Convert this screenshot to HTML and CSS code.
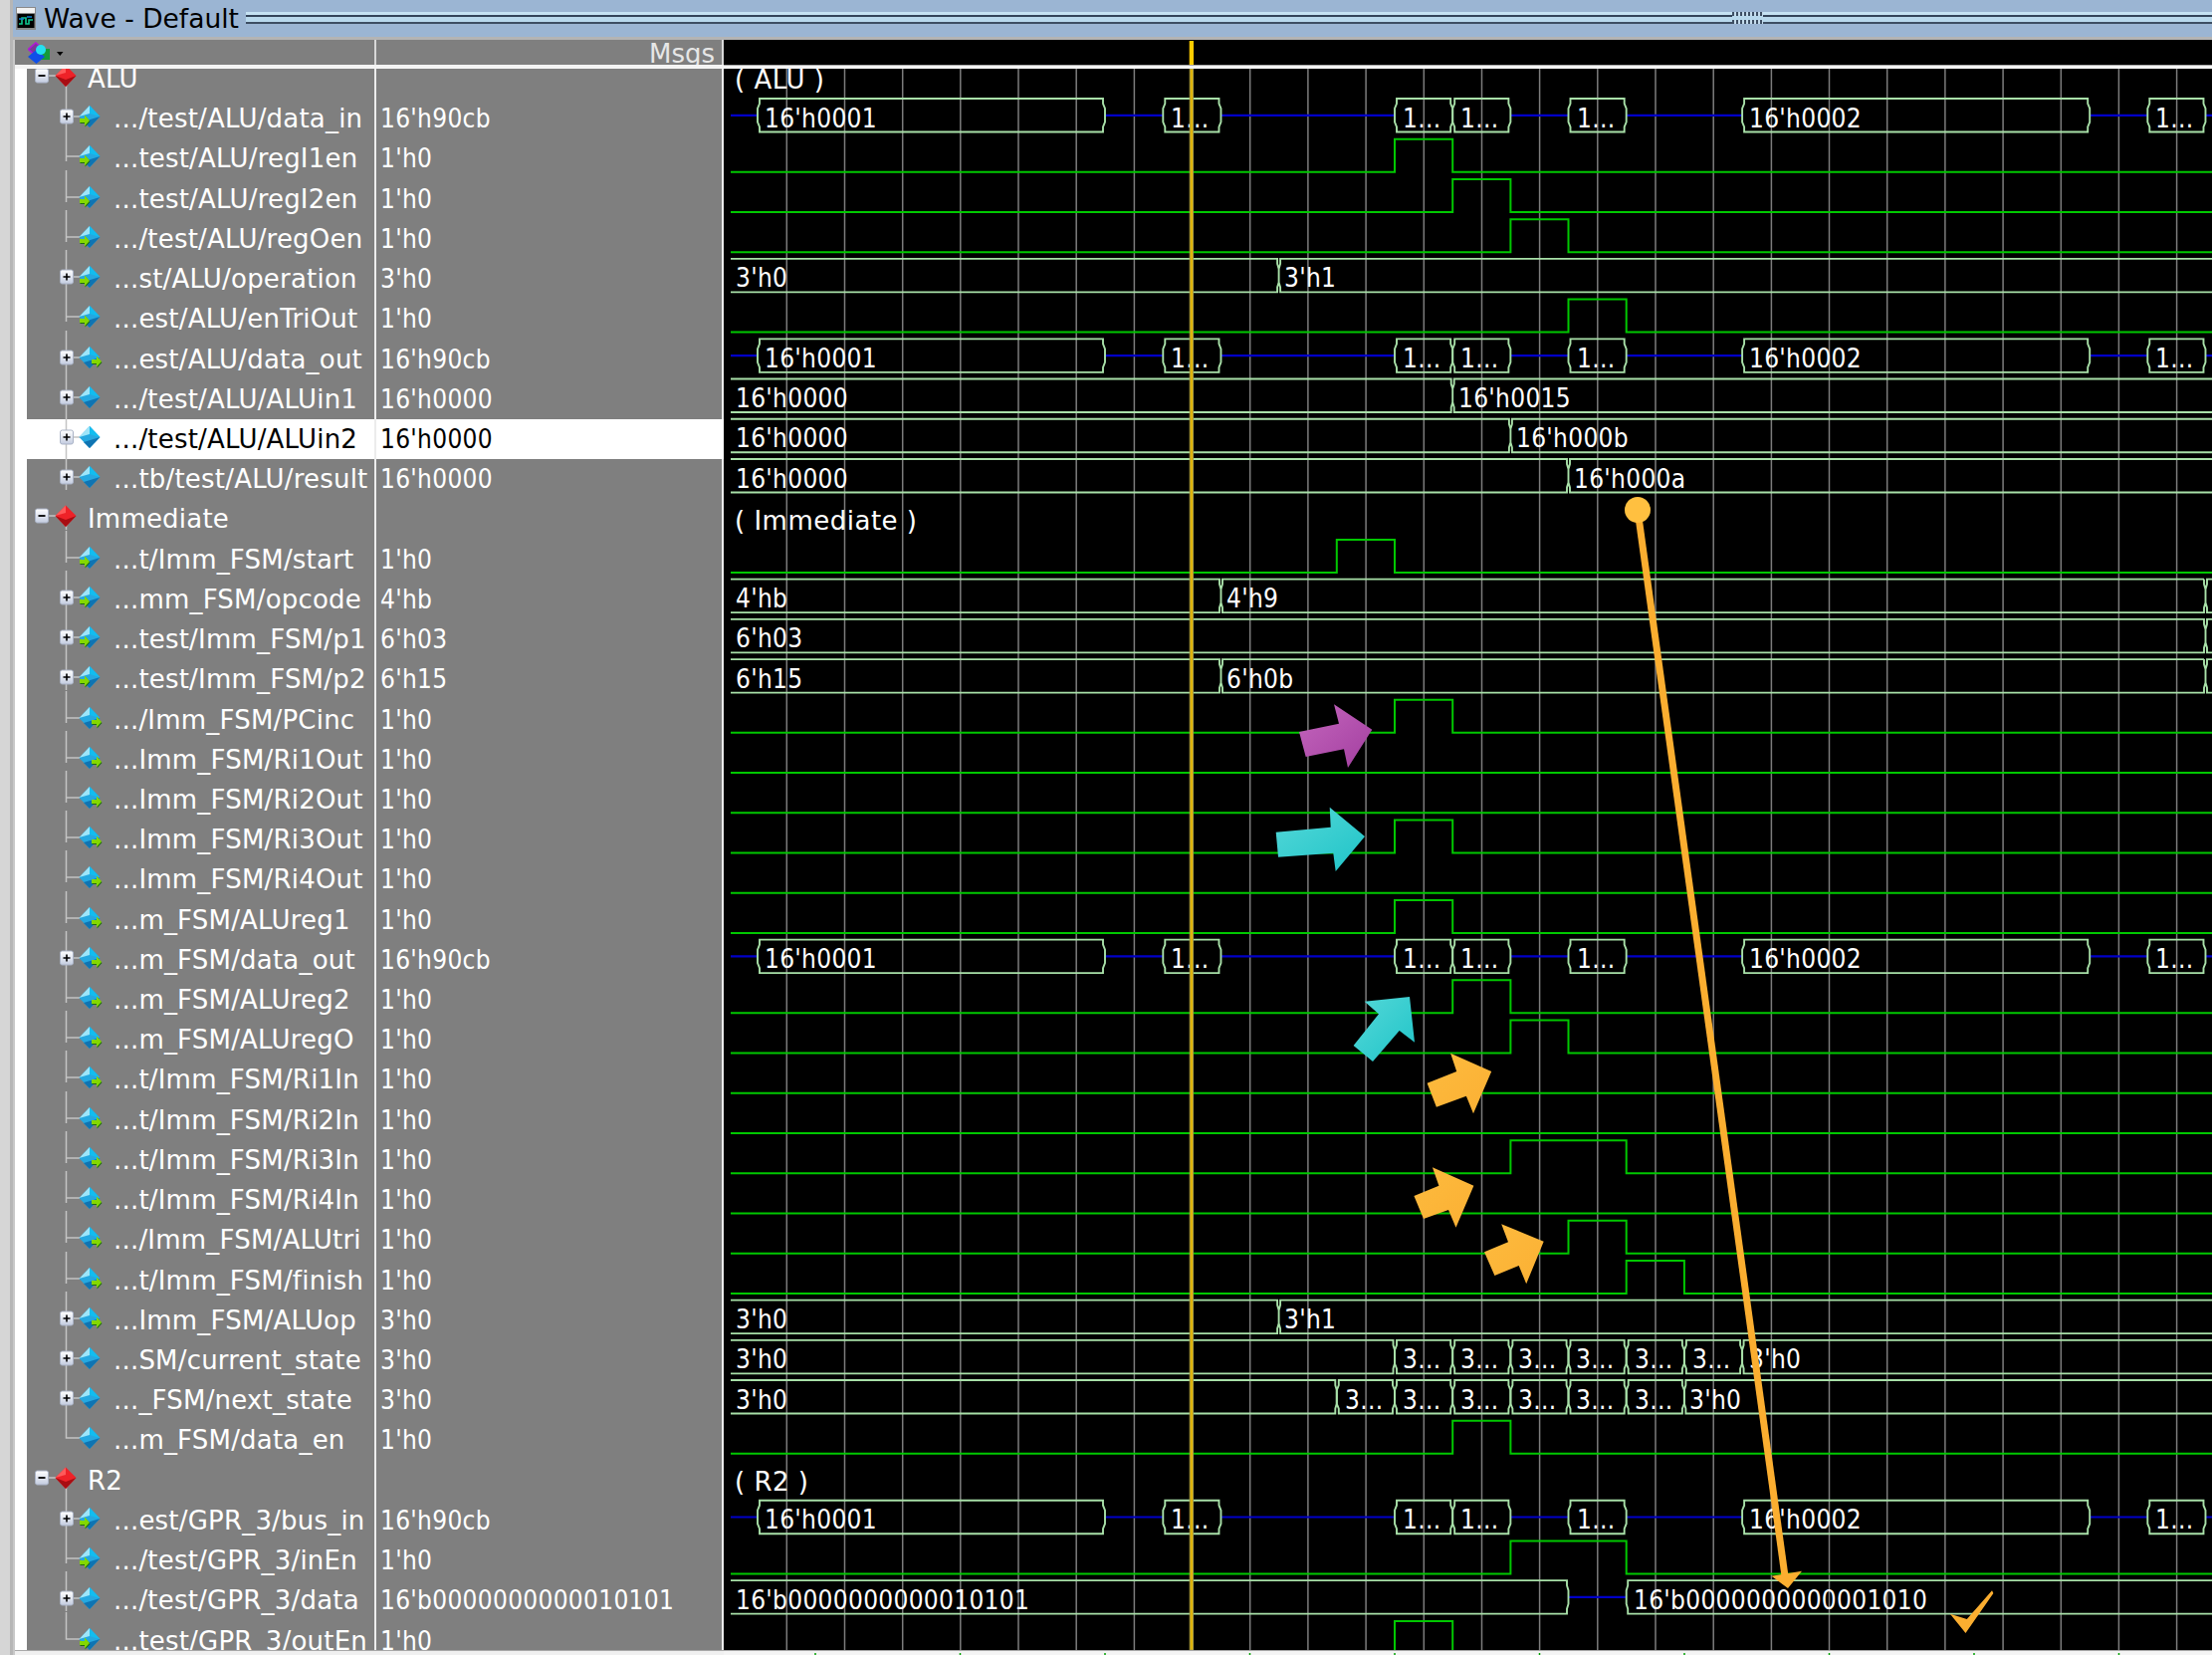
FILE: index.html
```html
<!DOCTYPE html>
<html lang="en">
<head>
<meta charset="utf-8">
<title>Wave - Default</title>
<link rel="stylesheet" href="styles.css">
</head>
<body>
<svg class="defs" width="0" height="0" aria-hidden="true">
  <defs>
    <linearGradient id="btn" x1="0" y1="0" x2="0" y2="1"><stop offset="0" stop-color="#fff"/><stop offset="1" stop-color="#c3cce0"/></linearGradient>
    <linearGradient id="arrowPurple" x1="0" y1="0" x2="1" y2="1"><stop offset="0" stop-color="#c466bd"/><stop offset="1" stop-color="#a33fa0"/></linearGradient>
    <linearGradient id="arrowCyan" x1="0" y1="0" x2="1" y2="1"><stop offset="0" stop-color="#55d8d8"/><stop offset="1" stop-color="#1fc4c8"/></linearGradient>
    <linearGradient id="arrowOrange" x1="0" y1="0" x2="1" y2="1"><stop offset="0" stop-color="#fdbb3e"/><stop offset="1" stop-color="#fbb034"/></linearGradient>

    <g id="plus"><rect x="33.5" y="11" width="13" height="14" rx="2" fill="url(#btn)" stroke="#aab3c6"/><path d="M36.5 18h7M40 14.500v7" stroke="#000" stroke-width="1.600"/></g>
    <g id="leaf"><path d="M39.500 -9V23M39.500 18H53" class="tree"/></g>
    <g id="last"><path d="M39.500 -9V18H53" class="tree"/></g>
    <g id="branch"><path d="M39.500 -9V31M46 18H53" class="tree"/><use href="#plus"/></g>
    <g id="diamond">
      <path d="M63 7L73.500 18L63 29L52.500 18Z" fill="#25a8e0"/>
      <path d="M73.500 18L63 29L57 23Z" fill="#0f74b2"/>
      <path d="M63 7L52.500 18L63 15Z" fill="#9ee6fa"/>
      <path d="M63 15L73.500 18L63 7Z" fill="#12bdf0"/>
    </g>
    <g id="arrowShape"><path d="M0 -2h5v-3.500l5 5.500l-5 5.500v-3.500h-5z" fill="#1d6a10" transform="translate(.5 1)"/><path d="M0 -2h5v-3.500l5 5.500l-5 5.500v-3.500h-5z" fill="#84d800"/></g>
    <g id="sig"><use href="#diamond"/></g>
    <g id="sig-in"><use href="#diamond"/><use href="#arrowShape" transform="translate(53 22)"/></g>
    <g id="sig-out"><use href="#diamond"/><use href="#arrowShape" transform="translate(65 22)"/></g>
    <g id="group">
      <path d="M21 17H30M39.500 26V31" class="tree"/>
      <rect x="8.500" y="10" width="13" height="14" rx="2" fill="url(#btn)" stroke="#aab3c6"/><path d="M11.500 17h7" stroke="#000" stroke-width="1.800"/>
      <path d="M39 6.500L49.500 17L39 28L28.500 17Z" fill="#ee2228"/>
      <path d="M49.500 17L39 28L28.500 17L39 21Z" fill="#a80d12"/>
      <path d="M39 6.500L28.500 17L39 14Z" fill="#ff5a5a"/>
    </g>
  </defs>
</svg>

<div class="window">
  <div class="edge"></div>
  <div class="main">
    <header class="title">
      <svg class="title-icon" width="20" height="23" viewBox="0 0 20 23">
        <rect width="20" height="23" fill="#8a8a8a"/><rect x="1" y="1" width="18" height="5" fill="#f2f2f2"/><rect x="1.500" y="7" width="17" height="14" fill="#000"/>
        <path d="M3 17h3v-6h4v6h3v-4h4" fill="none" stroke="#10c890" stroke-width="1.600"/><path d="M3 12h5M11 10h5" stroke="#1080d0" stroke-width="1.400"/>
      </svg>
      <span class="title-text">Wave - Default</span>
      <div class="stripes stripes-left"></div>
      <div class="handle"></div>
      <div class="stripes stripes-right"></div>
    </header>
    <div class="panes">
      <div class="table">
        <div class="head">
          <div class="head-name">
            <svg class="head-icon" width="36" height="23" viewBox="0 0 36 23">
              <path d="M8 1L15.500 7.500L8 14L.5 7.500Z" fill="#7a3a96" stroke="#b018d8" stroke-width="1.600"/>
              <rect x="10" y="7" width="12" height="11" fill="#159a3a"/>
              <path d="M8.500 8L17 15L8.500 22L0 15Z" fill="#0f4fe8"/>
              <circle cx="13" cy="8" r="5" fill="#25e0f0"/>
              <path d="M29 10h6.500l-3.250 4z" fill="#000"/>
            </svg>
          </div>
          <div class="head-val">Msgs</div>
        </div>
        <div class="list">
          <div class="rows">
            <div class="row group"><div class="name"><svg class="node"><use href="#group"/></svg><span>ALU</span></div><div class="val"></div></div>
            <div class="row"><div class="name"><svg class="node"><use href="#branch"/><use href="#sig-in"/></svg><span>.../test/ALU/data_in</span></div><div class="val">16'h90cb</div></div>
            <div class="row"><div class="name"><svg class="node"><use href="#leaf"/><use href="#sig-in"/></svg><span>...test/ALU/regI1en</span></div><div class="val">1'h0</div></div>
            <div class="row"><div class="name"><svg class="node"><use href="#leaf"/><use href="#sig-in"/></svg><span>...test/ALU/regI2en</span></div><div class="val">1'h0</div></div>
            <div class="row"><div class="name"><svg class="node"><use href="#leaf"/><use href="#sig-in"/></svg><span>.../test/ALU/regOen</span></div><div class="val">1'h0</div></div>
            <div class="row"><div class="name"><svg class="node"><use href="#branch"/><use href="#sig-in"/></svg><span>...st/ALU/operation</span></div><div class="val">3'h0</div></div>
            <div class="row"><div class="name"><svg class="node"><use href="#leaf"/><use href="#sig-in"/></svg><span>...est/ALU/enTriOut</span></div><div class="val">1'h0</div></div>
            <div class="row"><div class="name"><svg class="node"><use href="#branch"/><use href="#sig-out"/></svg><span>...est/ALU/data_out</span></div><div class="val">16'h90cb</div></div>
            <div class="row"><div class="name"><svg class="node"><use href="#branch"/><use href="#sig"/></svg><span>.../test/ALU/ALUin1</span></div><div class="val">16'h0000</div></div>
            <div class="row selected"><div class="name"><svg class="node"><use href="#branch"/><use href="#sig"/></svg><span>.../test/ALU/ALUin2</span></div><div class="val">16'h0000</div></div>
            <div class="row"><div class="name"><svg class="node"><use href="#branch"/><use href="#sig"/></svg><span>...tb/test/ALU/result</span></div><div class="val">16'h0000</div></div>
            <div class="row group"><div class="name"><svg class="node"><use href="#group"/></svg><span>Immediate</span></div><div class="val"></div></div>
            <div class="row"><div class="name"><svg class="node"><use href="#leaf"/><use href="#sig-in"/></svg><span>...t/Imm_FSM/start</span></div><div class="val">1'h0</div></div>
            <div class="row"><div class="name"><svg class="node"><use href="#branch"/><use href="#sig-in"/></svg><span>...mm_FSM/opcode</span></div><div class="val">4'hb</div></div>
            <div class="row"><div class="name"><svg class="node"><use href="#branch"/><use href="#sig-in"/></svg><span>...test/Imm_FSM/p1</span></div><div class="val">6'h03</div></div>
            <div class="row"><div class="name"><svg class="node"><use href="#branch"/><use href="#sig-in"/></svg><span>...test/Imm_FSM/p2</span></div><div class="val">6'h15</div></div>
            <div class="row"><div class="name"><svg class="node"><use href="#leaf"/><use href="#sig-out"/></svg><span>.../Imm_FSM/PCinc</span></div><div class="val">1'h0</div></div>
            <div class="row"><div class="name"><svg class="node"><use href="#leaf"/><use href="#sig-out"/></svg><span>...Imm_FSM/Ri1Out</span></div><div class="val">1'h0</div></div>
            <div class="row"><div class="name"><svg class="node"><use href="#leaf"/><use href="#sig-out"/></svg><span>...Imm_FSM/Ri2Out</span></div><div class="val">1'h0</div></div>
            <div class="row"><div class="name"><svg class="node"><use href="#leaf"/><use href="#sig-out"/></svg><span>...Imm_FSM/Ri3Out</span></div><div class="val">1'h0</div></div>
            <div class="row"><div class="name"><svg class="node"><use href="#leaf"/><use href="#sig-out"/></svg><span>...Imm_FSM/Ri4Out</span></div><div class="val">1'h0</div></div>
            <div class="row"><div class="name"><svg class="node"><use href="#leaf"/><use href="#sig-out"/></svg><span>...m_FSM/ALUreg1</span></div><div class="val">1'h0</div></div>
            <div class="row"><div class="name"><svg class="node"><use href="#branch"/><use href="#sig-out"/></svg><span>...m_FSM/data_out</span></div><div class="val">16'h90cb</div></div>
            <div class="row"><div class="name"><svg class="node"><use href="#leaf"/><use href="#sig-out"/></svg><span>...m_FSM/ALUreg2</span></div><div class="val">1'h0</div></div>
            <div class="row"><div class="name"><svg class="node"><use href="#leaf"/><use href="#sig-out"/></svg><span>...m_FSM/ALUregO</span></div><div class="val">1'h0</div></div>
            <div class="row"><div class="name"><svg class="node"><use href="#leaf"/><use href="#sig-out"/></svg><span>...t/Imm_FSM/Ri1In</span></div><div class="val">1'h0</div></div>
            <div class="row"><div class="name"><svg class="node"><use href="#leaf"/><use href="#sig-out"/></svg><span>...t/Imm_FSM/Ri2In</span></div><div class="val">1'h0</div></div>
            <div class="row"><div class="name"><svg class="node"><use href="#leaf"/><use href="#sig-out"/></svg><span>...t/Imm_FSM/Ri3In</span></div><div class="val">1'h0</div></div>
            <div class="row"><div class="name"><svg class="node"><use href="#leaf"/><use href="#sig-out"/></svg><span>...t/Imm_FSM/Ri4In</span></div><div class="val">1'h0</div></div>
            <div class="row"><div class="name"><svg class="node"><use href="#leaf"/><use href="#sig-out"/></svg><span>.../Imm_FSM/ALUtri</span></div><div class="val">1'h0</div></div>
            <div class="row"><div class="name"><svg class="node"><use href="#leaf"/><use href="#sig-out"/></svg><span>...t/Imm_FSM/finish</span></div><div class="val">1'h0</div></div>
            <div class="row"><div class="name"><svg class="node"><use href="#branch"/><use href="#sig-out"/></svg><span>...Imm_FSM/ALUop</span></div><div class="val">3'h0</div></div>
            <div class="row"><div class="name"><svg class="node"><use href="#branch"/><use href="#sig"/></svg><span>...SM/current_state</span></div><div class="val">3'h0</div></div>
            <div class="row"><div class="name"><svg class="node"><use href="#branch"/><use href="#sig"/></svg><span>..._FSM/next_state</span></div><div class="val">3'h0</div></div>
            <div class="row"><div class="name"><svg class="node"><use href="#last"/><use href="#sig"/></svg><span>...m_FSM/data_en</span></div><div class="val">1'h0</div></div>
            <div class="row group"><div class="name"><svg class="node"><use href="#group"/></svg><span>R2</span></div><div class="val"></div></div>
            <div class="row"><div class="name"><svg class="node"><use href="#branch"/><use href="#sig-in"/></svg><span>...est/GPR_3/bus_in</span></div><div class="val">16'h90cb</div></div>
            <div class="row"><div class="name"><svg class="node"><use href="#leaf"/><use href="#sig-in"/></svg><span>.../test/GPR_3/inEn</span></div><div class="val">1'h0</div></div>
            <div class="row"><div class="name"><svg class="node"><use href="#branch"/><use href="#sig"/></svg><span>.../test/GPR_3/data</span></div><div class="val">16'b0000000000010101</div></div>
            <div class="row"><div class="name"><svg class="node"><use href="#last"/><use href="#sig-in"/></svg><span>...test/GPR_3/outEn</span></div><div class="val">1'h0</div></div>
          </div>
        </div>
        <div class="foot"></div>
      </div>

      <svg class="wave" width="1495" height="1622" viewBox="727 40 1495 1622">
        <defs>
          <path id="lo" d="M734 0H2222"/>
          <path id="pm1" d="M734 0H1342.800V-33H1401V0H2222"/>
          <path id="p0" d="M734 0H1401V-33H1459.200V0H2222"/>
          <path id="p1" d="M734 0H1459.200V-33H1517.400V0H2222"/>
          <path id="p2" d="M734 0H1517.400V-33H1575.500V0H2222"/>
          <path id="p3" d="M734 0H1575.500V-33H1633.700V0H2222"/>
          <path id="p4" d="M734 0H1633.700V-33H1691.900V0H2222"/>
          <path id="p23" d="M734 0H1517.400V-33H1633.700V0H2222"/>
          <path id="box58" d="M2-33.500H56.180v5l2 5v13.500l-2 5v5H2v-5l-2-5v-13.500l2-5z"/>
          <g id="bus">
            <path class="blue" d="M734-16.700H761M1110-16.700H1168.300M1226.500-16.700H1401M1517.400-16.700H1575.500M1633.700-16.700H1750.100M2099.200-16.700H2157.300M2215.500-16.700H2222"/>
            <path class="busline" d="M763-33.500H1108v5l2 5v13.500l-2 5v5H763v-5l-2-5v-13.500l2-5zM1752.100-33.500H2097.200v5l2 5v13.500l-2 5v5H1752.100v-5l-2-5v-13.500l2-5z"/>
            <use class="busline" href="#box58" x="1168.300"/>
            <use class="busline" href="#box58" x="1401"/>
            <use class="busline" href="#box58" x="1459.200"/>
            <use class="busline" href="#box58" x="1575.500"/>
            <use class="busline" href="#box58" x="2157.300"/>
          </g>
        </defs>
        <rect class="bg" x="727" y="40" width="1495" height="1622"/>

        <path class="grid" d="M790.300 69V1657M848.500 69V1657M906.700 69V1657M964.800 69V1657M1023 69V1657M1081.200 69V1657M1139.400 69V1657M1255.700 69V1657M1313.900 69V1657M1372.100 69V1657M1430.300 69V1657M1488.500 69V1657M1546.600 69V1657M1604.800 69V1657M1663 69V1657M1721.200 69V1657M1779.400 69V1657M1837.500 69V1657M1895.700 69V1657M1953.900 69V1657M2012.100 69V1657M2070.300 69V1657M2128.400 69V1657M2186.600 69V1657"/>

        <text class="wg" x="738" y="89">( ALU )</text>
        <text class="wg" x="738" y="532">( Immediate )</text>
        <text class="wg" x="738" y="1497">( R2 )</text>

        <g class="sigs">
          <use href="#p0" y="172.740"/>
          <use href="#p1" y="212.960"/>
          <use href="#p2" y="253.180"/>
          <use href="#p3" y="333.620"/>
          <use href="#pm1" y="574.940"/>
          <use href="#p0" y="735.820"/>
          <use href="#lo" y="776.040"/>
          <use href="#lo" y="816.260"/>
          <use href="#p0" y="856.480"/>
          <use href="#lo" y="896.700"/>
          <use href="#p0" y="936.920"/>
          <use href="#p1" y="1017.360"/>
          <use href="#p2" y="1057.580"/>
          <use href="#lo" y="1097.800"/>
          <use href="#lo" y="1138.020"/>
          <use href="#p23" y="1178.240"/>
          <use href="#lo" y="1218.460"/>
          <use href="#p3" y="1258.680"/>
          <use href="#p4" y="1298.900"/>
          <use href="#p1" y="1459.780"/>
          <use href="#p23" y="1580.440"/>
          <use href="#p0" y="1660.880"/>
        </g>

        <g transform="translate(0 132.520)"><use href="#bus"/><text class="wt" x="768" y="-5">16'h0001</text><text class="wt" x="1176" y="-5">1...</text><text class="wt" x="1409" y="-5">1...</text><text class="wt" x="1467" y="-5">1...</text><text class="wt" x="1584" y="-5">1...</text><text class="wt" x="1757" y="-5">16'h0002</text><text class="wt" x="2165" y="-5">1...</text></g>
        <g transform="translate(0 373.840)"><use href="#bus"/><text class="wt" x="768" y="-5">16'h0001</text><text class="wt" x="1176" y="-5">1...</text><text class="wt" x="1409" y="-5">1...</text><text class="wt" x="1467" y="-5">1...</text><text class="wt" x="1584" y="-5">1...</text><text class="wt" x="1757" y="-5">16'h0002</text><text class="wt" x="2165" y="-5">1...</text></g>
        <g transform="translate(0 977.140)"><use href="#bus"/><text class="wt" x="768" y="-5">16'h0001</text><text class="wt" x="1176" y="-5">1...</text><text class="wt" x="1409" y="-5">1...</text><text class="wt" x="1467" y="-5">1...</text><text class="wt" x="1584" y="-5">1...</text><text class="wt" x="1757" y="-5">16'h0002</text><text class="wt" x="2165" y="-5">1...</text></g>
        <g transform="translate(0 1540.220)"><use href="#bus"/><text class="wt" x="768" y="-5">16'h0001</text><text class="wt" x="1176" y="-5">1...</text><text class="wt" x="1409" y="-5">1...</text><text class="wt" x="1467" y="-5">1...</text><text class="wt" x="1584" y="-5">1...</text><text class="wt" x="1757" y="-5">16'h0002</text><text class="wt" x="2165" y="-5">1...</text></g>

        <g transform="translate(0 293.400)"><path class="busline" d="M734-33.500H1283.100v5l1.500 5v13.500l-1.500 5v5H734M2222-33.500H1286.100v5l-1.500 5v13.500l1.500 5v5H2222"/><text class="wt" x="739" y="-5">3'h0</text><text class="wt" x="1290" y="-5">3'h1</text></g>
        <g transform="translate(0 1339.120)"><path class="busline" d="M734-33.500H1283.100v5l1.500 5v13.500l-1.500 5v5H734M2222-33.500H1286.100v5l-1.500 5v13.500l1.500 5v5H2222"/><text class="wt" x="739" y="-5">3'h0</text><text class="wt" x="1290" y="-5">3'h1</text></g>
        <g transform="translate(0 414.060)"><path class="busline" d="M734-33.500H1457.700v5l1.500 5v13.500l-1.500 5v5H734M2222-33.500H1460.700v5l-1.500 5v13.500l1.500 5v5H2222"/><text class="wt" x="739" y="-5">16'h0000</text><text class="wt" x="1465" y="-5">16'h0015</text></g>
        <g transform="translate(0 454.280)"><path class="busline" d="M734-33.500H1515.900v5l1.500 5v13.500l-1.500 5v5H734M2222-33.500H1518.900v5l-1.500 5v13.500l1.500 5v5H2222"/><text class="wt" x="739" y="-5">16'h0000</text><text class="wt" x="1523" y="-5">16'h000b</text></g>
        <g transform="translate(0 494.500)"><path class="busline" d="M734-33.500H1574v5l1.500 5v13.500l-1.500 5v5H734M2222-33.500H1577v5l-1.500 5v13.500l1.500 5v5H2222"/><text class="wt" x="739" y="-5">16'h0000</text><text class="wt" x="1581" y="-5">16'h000a</text></g>
        <g transform="translate(0 615.160)"><path class="busline" d="M734-33.500H1225v5l1.500 5v13.500l-1.500 5v5H734M2214-33.500H1228v5l-1.500 5v13.500l1.500 5v5H2214v-5l1.500-5v-13.500l-1.500-5v-5M2222-33.500H2217v5l-1.500 5v13.500l1.500 5v5H2222"/><text class="wt" x="739" y="-5">4'hb</text><text class="wt" x="1232" y="-5">4'h9</text></g>
        <g transform="translate(0 655.380)"><path class="busline" d="M734-33.500H2214v5l1.500 5v13.500l-1.500 5v5H734M2222-33.500H2217v5l-1.500 5v13.500l1.500 5v5H2222"/><text class="wt" x="739" y="-5">6'h03</text></g>
        <g transform="translate(0 695.600)"><path class="busline" d="M734-33.500H1225v5l1.500 5v13.500l-1.500 5v5H734M2214-33.500H1228v5l-1.500 5v13.500l1.500 5v5H2214v-5l1.500-5v-13.500l-1.500-5v-5M2222-33.500H2217v5l-1.500 5v13.500l1.500 5v5H2222"/><text class="wt" x="739" y="-5">6'h15</text><text class="wt" x="1232" y="-5">6'h0b</text></g>

        <g transform="translate(0 1379.340)">
          <path class="busline" d="M734-33.500H1399.500v5l1.500 5v13.500l-1.500 5v5H734M2222-33.500H1751.600v5l-1.500 5v13.500l1.500 5v5H2222"/>
          <use class="busline" href="#box58" x="1401"/><use class="busline" href="#box58" x="1459.200"/><use class="busline" href="#box58" x="1517.400"/><use class="busline" href="#box58" x="1575.500"/><use class="busline" href="#box58" x="1633.700"/><use class="busline" href="#box58" x="1691.900"/>
          <text class="wt" x="739" y="-5">3'h0</text><text class="wt" x="1409" y="-5">3...</text><text class="wt" x="1467" y="-5">3...</text><text class="wt" x="1525" y="-5">3...</text><text class="wt" x="1583" y="-5">3...</text><text class="wt" x="1642" y="-5">3...</text><text class="wt" x="1700" y="-5">3...</text><text class="wt" x="1757" y="-5">3'h0</text>
        </g>
        <g transform="translate(0 1419.560)">
          <path class="busline" d="M734-33.500H1341.300v5l1.500 5v13.500l-1.500 5v5H734M2222-33.500H1693.400v5l-1.500 5v13.500l1.500 5v5H2222"/>
          <use class="busline" href="#box58" x="1342.800"/><use class="busline" href="#box58" x="1401"/><use class="busline" href="#box58" x="1459.200"/><use class="busline" href="#box58" x="1517.400"/><use class="busline" href="#box58" x="1575.500"/><use class="busline" href="#box58" x="1633.700"/>
          <text class="wt" x="739" y="-5">3'h0</text><text class="wt" x="1351" y="-5">3...</text><text class="wt" x="1409" y="-5">3...</text><text class="wt" x="1467" y="-5">3...</text><text class="wt" x="1525" y="-5">3...</text><text class="wt" x="1583" y="-5">3...</text><text class="wt" x="1642" y="-5">3...</text><text class="wt" x="1697" y="-5">3'h0</text>
        </g>
        <g transform="translate(0 1620.660)">
          <path class="blue" d="M1575.500-16.700H1633.700"/>
          <path class="busline" d="M734-33.500H1574v5l1.500 5v13.500l-1.500 5v5H734M2222-33.500H1635.200v5l-1.500 5v13.500l1.500 5v5H2222"/>
          <text class="wt" x="739" y="-5">16'b0000000000010101</text><text class="wt" x="1641" y="-5">16'b0000000000001010</text>
        </g>

        <rect class="cursor-top" x="1194.700" y="41" width="4.300" height="24"/>
        <rect class="cursor" x="1195.200" y="69" width="3.300" height="1588"/>

        <path class="lead" d="M1645 512L1794 1590"/>
        <circle class="dot" cx="1645" cy="512" r="13"/>
        <polygon class="tip" points="1779.500,1582.700 1810,1577.700 1796,1595"/>
        <polygon class="shade-purple" points="1305,735 1345,726.700 1340,707.300 1378.300,732.700 1354,771 1350,752.300 1311.700,760"/>
        <polygon class="shade-cyan" points="1281.700,835.700 1336.700,830.700 1335.700,810.700 1371,840 1341.700,875 1339.300,856.700 1284,860.700"/>
        <polygon class="shade-cyan" points="1370.700,1005.700 1416,1001 1421,1046.700 1405.700,1035 1379,1066 1359.600,1050 1385,1018.300"/>
        <polygon class="shade-orange" points="1433.600,1087.700 1463.200,1076 1457.100,1057.700 1498.200,1076 1480,1118.300 1472.900,1100.700 1442.900,1111.700"/>
        <polygon class="shade-orange" points="1420.400,1201 1445.400,1190.700 1438.900,1172.300 1480.400,1190.700 1462.500,1232.700 1455,1215 1430,1224"/>
        <polygon class="shade-orange" points="1491,1257.300 1515,1247.300 1508.200,1229.300 1550.700,1246.700 1533.200,1289.300 1525.700,1271 1501.400,1281"/>
        <polygon class="check" points="1958.900,1620.700 1975.800,1626 2001,1597.300 2002.400,1600 1974.500,1640"/>

        <rect class="rule-dark" x="727" y="65" width="1495" height="1"/>
        <rect class="rule-light" x="727" y="66" width="1495" height="3"/>
        <rect class="rule-dark" x="727" y="1657" width="1495" height="1"/>
        <rect class="rule-light" x="727" y="1658" width="1495" height="4"/>
        <path class="ticks" d="M819 1660V1662M964.500 1660V1662M1110 1660V1662M1255.500 1660V1662M1401 1660V1662M1546.500 1660V1662M1692 1660V1662M1837.500 1660V1662M1983 1660V1662M2128.500 1660V1662"/>
      </svg>
    </div>
  </div>
</div>
</body>
</html>
```
FILE: styles.css
```css
* { box-sizing: border-box; }

html, body { margin: 0; padding: 0; }

body {
  width: 2222px;
  height: 1662px;
  overflow: hidden;
  background: #d0d0d0;
  color: #fff;
  font-family: "DejaVu Sans", "Liberation Sans", sans-serif;
  font-stretch: condensed;
  font-size: 26px;
}

.defs { position: absolute; }

.tree { fill: none; stroke: #c4c4c4; stroke-width: 1.5; }

.window { display: flex; height: 1662px; }

.edge {
  flex: none;
  width: 13px;
  background: #d6d6d6;
  border-right: 3px solid #b6b6b6;
}

.main { flex: 1; min-width: 0; display: flex; flex-direction: column; }

.title {
  flex: none;
  height: 37px;
  display: flex;
  align-items: flex-start;
  background: #9bb5d3;
  color: #000;
}

.title-icon { flex: none; margin: 7px 0 0 3px; }

.title-text {
  flex: none;
  width: 203px;
  margin-left: 8px;
  line-height: 37px;
  font-size: 26.5px;
  font-stretch: normal;
  white-space: nowrap;
}

.stripes {
  height: 12px;
  margin-top: 12px;
  background: linear-gradient(#c5e2f3 0 3px, #33445a 3px 5px, #b8d8ec 5px 10px, #3d4e63 10px 12px);
}

.stripes-left { flex: none; width: 1493px; }
.stripes-right { flex: 1; }

.handle {
  flex: none;
  width: 31px;
  height: 12px;
  margin-top: 12px;
  background:
    linear-gradient(transparent 0 4px, #b8d8ec 4px 8px, transparent 8px),
    repeating-linear-gradient(90deg, #3d4e63 0 2px, #c5dcec 2px 4px);
}

.panes {
  flex: 1;
  min-height: 0;
  display: flex;
  border-top: 3px solid #b4b4b4;
  background: #c8c8c8;
}

.table {
  flex: none;
  width: 714px;
  padding-left: 2px;
  display: flex;
  flex-direction: column;
}

.head {
  flex: none;
  height: 29px;
  display: grid;
  grid-template-columns: 363px 349px;
  background: #7f7f7f;
  border-bottom: 4px solid #f4f4f4;
  overflow: hidden;
}

.head-name, .head-val { border-right: 2px solid #d8d8d8; }

.head-icon { display: block; margin: 2px 0 0 13px; }

.head-val {
  text-align: right;
  padding-right: 7px;
  line-height: 28px;
  font-stretch: normal;
  color: #e6e6e6;
}

.list {
  flex: 1;
  min-height: 0;
  overflow: hidden;
  background: #7f7f7f;
  border-left: 12px solid #fff;
}

.rows { margin-top: -10px; }

.row {
  height: 40.22px;
  display: grid;
  grid-template-columns: 351px 349px;
  line-height: 40.22px;
  white-space: nowrap;
}

.name, .val { border-right: 2px solid #ececec; overflow: visible; }

.name { display: flex; font-stretch: normal; letter-spacing: .2px; }

.node { flex: none; width: 87px; height: 40px; overflow: visible; }

.group .node { width: 61px; }

.val { padding-left: 4px; letter-spacing: .3px; }

.selected { background: #fff; color: #000; }
.selected .val { border-right-color: #fff; }

.foot {
  flex: none;
  height: 5px;
  background: linear-gradient(#a8a8a8 0 1px, #f0f0f0 1px);
}

.wave { flex: none; display: block; }

.bg { fill: #000; }

.grid { fill: none; stroke: #7c7c7c; stroke-width: 1.5; }

.wt { fill: #fff; font-size: 26px; letter-spacing: .3px; white-space: pre; }

.wg { fill: #fff; font-size: 26px; font-stretch: normal; letter-spacing: .5px; white-space: pre; }

.sigs { fill: none; stroke: #00c800; stroke-width: 2; }

.busline { fill: none; stroke: #a8e0a8; stroke-width: 1.9; }

.blue { fill: none; stroke: #0000c8; stroke-width: 2.2; }

.cursor-top { fill: #ffcc00; }
.cursor { fill: #deb30c; stroke: #a89c40; stroke-width: 1; }

.lead { fill: none; stroke: #fbae30; stroke-width: 7; }
.dot { fill: #ffc040; }
.tip, .check { fill: #fbae30; }

.shade-purple { fill: url(#arrowPurple); }
.shade-cyan { fill: url(#arrowCyan); }
.shade-orange { fill: url(#arrowOrange); }

.rule-dark { fill: #a8a8a8; }
.rule-light { fill: #f4f4f4; }

.ticks { fill: none; stroke: #00a000; stroke-width: 1.5; }
```
